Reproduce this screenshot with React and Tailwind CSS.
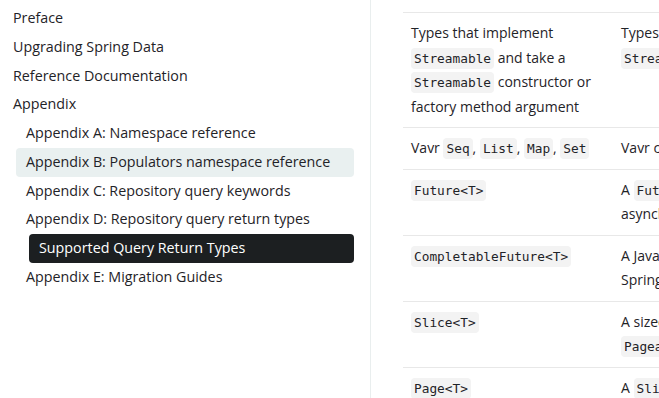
import React from "react";

const C = ({ children }) => (
  <code className="rounded-[4px] bg-[#f3f3f3] px-[3px] py-[3px] font-['DejaVu_Sans_Mono',monospace] text-[12.8px] leading-none text-[#1f2328]">
    {children}
  </code>
);

const nav = [
  { label: "Preface", level: 0 },
  { label: "Upgrading Spring Data", level: 0 },
  { label: "Reference Documentation", level: 0 },
  { label: "Appendix", level: 0 },
  { label: "Appendix A: Namespace reference", level: 1 },
  { label: "Appendix B: Populators namespace reference", level: 1, hover: true },
  { label: "Appendix C: Repository query keywords", level: 1 },
  { label: "Appendix D: Repository query return types", level: 1 },
  { label: "Supported Query Return Types", level: 2, active: true },
  { label: "Appendix E: Migration Guides", level: 1 },
];

const rows = [
  {
    a: (
      <>
        Types that implement
        <br />
        <C>Streamable</C> and take a
        <br />
        <C>Streamable</C> constructor or
        <br />
        factory method argument
      </>
    ),
    b: (
      <>
        Types that expose a constructor or
        <br />
        <C>Streamable</C> argument
      </>
    ),
  },
  {
    a: (
      <>
        Vavr <C>Seq</C>, <C>List</C>, <C>Map</C>, <C>Set</C>
      </>
    ),
    b: <>Vavr collection types. See Support for Vavr Collections</>,
  },
  {
    a: <C>Future&lt;T&gt;</C>,
    b: (
      <>
        A <C>Future</C>. Expects a method to be annotated
        <br />
        asynchronous method execution capability
      </>
    ),
  },
  {
    a: <C>CompletableFuture&lt;T&gt;</C>,
    b: (
      <>
        A Java 8 <C>CompletableFuture</C>. Leverages
        <br />
        Spring's asynchronous method execution
      </>
    ),
  },
  {
    a: <C>Slice&lt;T&gt;</C>,
    b: (
      <>
        A sized chunk of data with an indication
        <br />
        <C>Pageable</C> method parameter.
      </>
    ),
  },
  {
    a: <C>Page&lt;T&gt;</C>,
    b: (
      <>
        A <C>Slice</C> with additional information
        <br />
        total number of results.
      </>
    ),
  },
];

export default function App() {
  return (
    <div className="flex h-[398px] w-[659px] overflow-hidden bg-white font-['Open_Sans',sans-serif] text-[#1f2328]">
      <aside className="w-[371px] shrink-0 border-r border-[#e9eeee] pt-[4px] pl-[3px] pr-[16px]">
        <ul className="flex flex-col">
          {nav.map((n) => (
            <li
              key={n.label}
              className={
                n.level === 0 ? "pl-0" : n.level === 1 ? "pl-[13px]" : "pl-[26px]"
              }
            >
              <div
                className={
                  "h-[28.75px] rounded-[4px] px-[10px] text-[14.3px] leading-[28.75px] whitespace-nowrap " +
                  (n.active
                    ? "bg-[#1c1f21] text-white"
                    : n.hover
                    ? "bg-[#e9f0f0]"
                    : "")
                }
              >
                {n.label}
              </div>
            </li>
          ))}
        </ul>
      </aside>
      <main className="min-w-0 flex-1 overflow-hidden pt-[12px] pl-[32px]">
        <table className="w-[620px] table-fixed border-collapse text-[14px] leading-[24.5px]">
          <colgroup>
            <col className="w-[210px]" />
            <col className="w-[410px]" />
          </colgroup>
          <tbody>
            {rows.map((r, i) => (
              <tr key={i} className="border-y border-[#e8e8e8] align-top">
                <td className="whitespace-nowrap px-[8px] py-[8px]">{r.a}</td>
                <td className="whitespace-nowrap px-[8px] py-[8px]">{r.b}</td>
              </tr>
            ))}
          </tbody>
        </table>
      </main>
    </div>
  );
}
